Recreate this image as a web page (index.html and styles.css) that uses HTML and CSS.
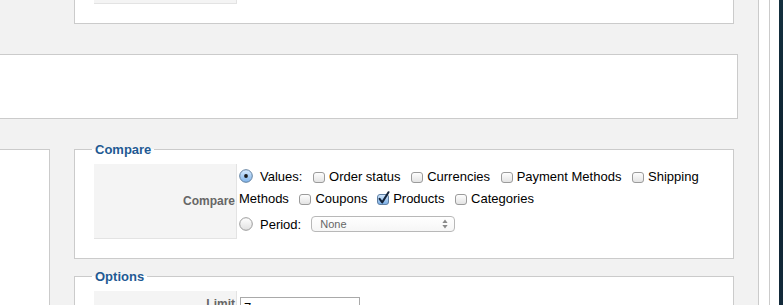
FILE: index.html
```html
<!DOCTYPE html>
<html lang="en">
<head>
<meta charset="utf-8">
<title>Report settings</title>
<link rel="stylesheet" href="styles.css">
</head>
<body>
<div class="frame">
  <div class="main">
    <div class="top-box">
      <div class="top-cell"></div>
    </div>
    <div class="mid-box"></div>
    <div class="bottom-row">
      <div class="side-box"></div>
      <div class="forms">
        <fieldset class="group">
          <legend class="group-title">Compare</legend>
          <div class="row">
            <div class="key">Compare</div>
            <div class="val">
              <div class="flow"><svg class="radio" width="14" height="14" viewBox="0 0 14 14"><defs><linearGradient id="rbOn" x1="0" y1="0" x2="0" y2="1"><stop offset="0" stop-color="#d9ecff"/><stop offset="1" stop-color="#7fb3ea"/></linearGradient></defs><circle cx="7" cy="7" r="6.3" fill="url(#rbOn)" stroke="#62809f" stroke-width="1"/><circle cx="7" cy="7" r="1.9" fill="#1b1b1b"/></svg>Values: <svg class="cb" width="12" height="11" viewBox="0 0 12 11"><defs><linearGradient id="cbOff" x1="0" y1="0" x2="0" y2="1"><stop offset="0" stop-color="#ffffff"/><stop offset="1" stop-color="#e2e2e2"/></linearGradient></defs><rect x="0.5" y="0.5" width="11" height="10" rx="2.5" fill="url(#cbOff)" stroke="#9b9b9b"/></svg>Order status <svg class="cb" width="12" height="11" viewBox="0 0 12 11"><rect x="0.5" y="0.5" width="11" height="10" rx="2.5" fill="url(#cbOff)" stroke="#9b9b9b"/></svg>Currencies <svg class="cb" width="12" height="11" viewBox="0 0 12 11"><rect x="0.5" y="0.5" width="11" height="10" rx="2.5" fill="url(#cbOff)" stroke="#9b9b9b"/></svg>Payment Methods <svg class="cb" width="12" height="11" viewBox="0 0 12 11"><rect x="0.5" y="0.5" width="11" height="10" rx="2.5" fill="url(#cbOff)" stroke="#9b9b9b"/></svg>Shipping Methods <svg class="cb" width="12" height="11" viewBox="0 0 12 11"><rect x="0.5" y="0.5" width="11" height="10" rx="2.5" fill="url(#cbOff)" stroke="#9b9b9b"/></svg>Coupons <svg class="cb cb-on" width="13" height="14" viewBox="0 0 13 14"><defs><linearGradient id="cbOn" x1="0" y1="0" x2="0" y2="1"><stop offset="0" stop-color="#d4e8fc"/><stop offset="1" stop-color="#7aaee6"/></linearGradient></defs><rect x="0.5" y="3.5" width="11" height="10" rx="2.5" fill="url(#cbOn)" stroke="#5f7fa3"/><path d="M2.6 7.8 L5.2 11.4 L11.5 1.2" fill="none" stroke="#14243a" stroke-width="2" stroke-linecap="round" stroke-linejoin="round"/></svg>Products <svg class="cb" width="12" height="11" viewBox="0 0 12 11"><rect x="0.5" y="0.5" width="11" height="10" rx="2.5" fill="url(#cbOff)" stroke="#9b9b9b"/></svg>Categories</div>
              <div class="period">
                <svg class="radio" width="14" height="14" viewBox="0 0 14 14"><defs><linearGradient id="rbOff" x1="0" y1="0" x2="0" y2="1"><stop offset="0" stop-color="#ffffff"/><stop offset="1" stop-color="#e0e0e0"/></linearGradient></defs><circle cx="7" cy="7" r="6.3" fill="url(#rbOff)" stroke="#9b9b9b" stroke-width="1"/></svg>
                <span class="period-label">Period:</span>
                <div class="select">
                  <span class="select-text">None</span>
                  <svg class="select-arrows" width="6" height="10" viewBox="0 0 6 10"><path d="M3 0.5 L5.6 4 L0.4 4 Z" fill="#8a8a8a"/><path d="M3 9.5 L5.6 6 L0.4 6 Z" fill="#8a8a8a"/></svg>
                </div>
              </div>
            </div>
          </div>
        </fieldset>
        <fieldset class="group group-options">
          <legend class="group-title">Options</legend>
          <div class="row">
            <div class="key key-limit">Limit</div>
            <div class="val val-limit">
              <input class="text-input" type="text" value="7">
            </div>
          </div>
        </fieldset>
      </div>
    </div>
  </div>
  <div class="gutter"></div>
  <div class="gutter2"></div>
  <div class="dark"></div>
</div>
</body>
</html>
```

FILE: styles.css
```css
html, body {
  margin: 0;
  padding: 0;
  height: 305px;
  overflow: hidden;
  background: #ffffff;
}

body {
  font-family: "Liberation Sans", Arial, sans-serif;
  font-size: 13px;
  color: #000;
}

.frame {
  display: flex;
  height: 305px;
}

.main {
  width: 758px;
  flex: 0 0 758px;
  background: #f2f2f2;
  border-right: 1px solid #cbcbcb;
  overflow: hidden;
}

.gutter {
  width: 10px;
  flex: 0 0 10px;
  background: #fff;
  border-right: 1px solid #cbcbcb;
}

.gutter2 {
  width: 9px;
  flex: 0 0 9px;
  background: #fff;
}

.dark {
  flex: 1 1 auto;
  background: linear-gradient(180deg, #14303f 0%, #0e2331 50%, #132a3a 100%);
}

/* top box (cut off at top) */
.top-box {
  margin-left: 74px;
  width: 658px;
  height: 23px;
  background: #fff;
  border: 1px solid #cbcbcb;
  border-top: none;
}

.top-cell {
  margin-left: 19px;
  width: 142px;
  height: 3px;
  background: #f4f4f4;
  border-right: 1px solid #e3e3e3;
  border-bottom: 1px solid #e3e3e3;
}

.mid-box {
  margin-top: 30px;
  width: 737px;
  height: 63px;
  background: #fff;
  border: 1px solid #cbcbcb;
  border-left: none;
}

.bottom-row {
  margin-top: 23px;
  display: flex;
  align-items: flex-start;
}

.side-box {
  margin-top: 7px;
  width: 49px;
  height: 200px;
  background: #fff;
  border-top: 1px solid #cbcbcb;
  border-right: 1px solid #cbcbcb;
}

.forms {
  margin-left: 24px;
  width: 660px;
}

.group {
  margin: 0;
  padding: 7px 19px 19px 19px;
  border: 1px solid #cbcbcb;
  background: #fff;
  min-width: 0;
}

.group-options {
  margin-top: 10px;
  padding-bottom: 40px;
}

.group-title {
  margin-left: -2px;
  padding: 0 3px;
  font-weight: bold;
  font-size: 13px;
  line-height: 15px;
  color: #1f5a93;
}

.row {
  display: flex;
}

.key {
  width: 141px;
  flex: 0 0 141px;
  padding-right: 1px;
  background: #f4f4f4;
  border-right: 1px solid #e3e3e3;
  border-bottom: 1px solid #e3e3e3;
  display: flex;
  align-items: center;
  justify-content: flex-end;
  font-weight: bold;
  font-size: 12px;
  color: #666;
}

.val {
  flex: 1 1 auto;
  padding: 2px 2px 3px 2px;
}

.flow {
  line-height: 22px;
}

.radio {
  vertical-align: -2px;
  margin-right: 7px;
}

.cb {
  vertical-align: -2px;
  margin: 0 4px 0 7px;
}

.cb-on {
  margin-right: 3px;
  margin-left: 6px;
}

.period {
  margin-top: 2px;
  height: 24px;
  display: flex;
  align-items: center;
  line-height: 15px;
}

.period .radio {
  margin-right: 7px;
}

.period-label {
  margin-right: 10px;
}

.select {
  box-sizing: border-box;
  width: 144px;
  height: 16px;
  border: 1px solid #b8b8b8;
  border-radius: 4px;
  background: linear-gradient(180deg, #ffffff, #f6f6f6);
  display: flex;
  align-items: center;
  justify-content: space-between;
  padding: 0 6px 0 8px;
}

.select-text {
  font-size: 11px;
  line-height: 14px;
  color: #666;
}

.val-limit {
  padding: 6px 2px 2px 3px;
}

.key-limit {
  height: 26px;
}

.text-input {
  box-sizing: border-box;
  width: 120px;
  height: 20px;
  margin: 0;
  padding: 0 3px;
  border: 1px solid #a9a9a9;
  font-family: "Liberation Sans", Arial, sans-serif;
  font-size: 13px;
  color: #000;
  background: #fff;
  outline: none;
}
```
